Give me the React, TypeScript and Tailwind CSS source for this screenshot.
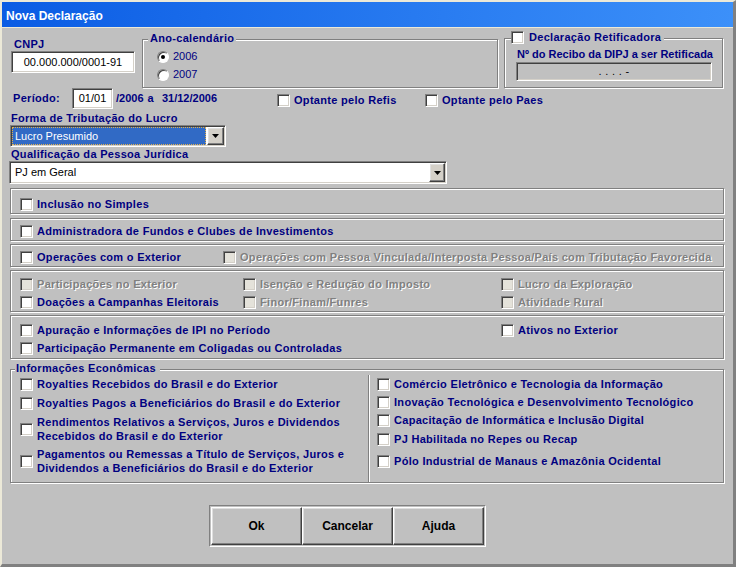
import React from "react";

// classic win32 3d edges
const sunken =
  "border border-t-[#808080] border-l-[#808080] border-r-white border-b-white shadow-[inset_1px_1px_0_#404040,inset_-1px_-1px_0_#d4d0c8]";
const raised =
  "border border-t-white border-l-white border-r-[#404040] border-b-[#404040] shadow-[inset_-1px_-1px_0_#808080,inset_1px_1px_0_#dfdfdf]";
const etched = "border border-[#808080] shadow-[inset_1px_1px_0_#fff,1px_1px_0_#fff]";
const disabledText = "text-[#808080] [text-shadow:1px_1px_0_#fff]";

function Box({ disabled }: { disabled?: boolean }) {
  return (
    <span
      className={`block w-[13px] h-[13px] shrink-0 ${sunken} ${disabled ? "bg-[#e4e2da]" : "bg-white"}`}
    />
  );
}

type CheckProps = {
  label: React.ReactNode;
  disabled?: boolean;
  className?: string;
};

function Check({ label, disabled, className = "" }: CheckProps) {
  return (
    <div className={`flex items-center gap-[4px] ${className}`}>
      <Box disabled={disabled} />
      <span className={`leading-[14px] whitespace-nowrap ${disabled ? disabledText : "text-[#000080]"}`}>
        {label}
      </span>
    </div>
  );
}

function Radio({ label, checked }: { label: string; checked?: boolean }) {
  return (
    <div className="flex items-center gap-[4px] h-[13px]">
      <span className="flex items-center justify-center w-[12px] h-[12px] rounded-full bg-white border border-t-[#808080] border-l-[#808080] border-r-white border-b-white shadow-[inset_1px_1px_0_#404040]">
        {checked && <span className="block w-[4px] h-[4px] rounded-full bg-black" />}
      </span>
      <span className="font-normal tracking-normal">{label}</span>
    </div>
  );
}

function Arrow() {
  return (
    <svg width="7" height="4" viewBox="0 0 7 4">
      <polygon points="0,0 7,0 3.5,4" fill="#000" />
    </svg>
  );
}

export default function App() {
  return (
    <div className="w-[736px] h-[567px] flex flex-col overflow-hidden bg-[#c0c0c0] font-['Liberation_Sans',Arial,sans-serif] text-[11px] leading-[13px] font-bold tracking-[0.3px] text-[#000080] border-t-2 border-l-2 border-r-[3px] border-b-[3px] border-t-[#ece9d8] border-l-[#ece9d8] border-r-[#808080] border-b-[#808080]">
      {/* title bar */}
      <div className="h-[26px] shrink-0 flex items-center pl-[4px] pt-[3px] border-b border-[#ece9d8] bg-gradient-to-r from-[#0a5ce4] to-[#3c90f9] text-white text-[12px] tracking-normal">
        Nova Declaração
      </div>

      <div className="flex-1 pl-[8px] pr-[9px]">
        {/* CNPJ / ano / retificadora */}
        <div className="flex items-start">
          <div className="w-[126px] pt-[10px] pl-[1px]">
            <div className="pl-[3px]">CNPJ</div>
            <div className={`${sunken} w-[124px] h-[22px] bg-white flex items-center justify-center font-normal tracking-normal text-black`}>
              00.000.000/0001-91
            </div>
          </div>

          <div className={`${etched} ml-[6px] mt-[11px] w-[356px] h-[49px]`}>
            <div className="-mt-[8px] ml-[5px] w-fit px-[2px] bg-[#c0c0c0]">Ano-calendário</div>
            <div className="mt-[5px] pl-[14px] flex flex-col gap-[5px]">
              <Radio checked label="2006" />
              <Radio label="2007" />
            </div>
          </div>

          <div className={`${etched} ml-[6px] mt-[10px] w-[219px] h-[50px]`}>
            <div className="-mt-[8px] ml-[6px] w-fit pr-[3px] bg-[#c0c0c0] flex items-center gap-[5px] h-[13px]">
              <Box />
              <span>Declaração Retificadora</span>
            </div>
            <div className="mt-[4px] pl-[12px] whitespace-nowrap tracking-normal">Nº do Recibo da DIPJ a ser Retificada</div>
            <div className={`${sunken} mt-[1px] ml-[11px] w-[196px] h-[19px] flex items-center justify-center font-normal text-black`}>
              . . . . -
            </div>
          </div>
        </div>

        {/* periodo */}
        <div className="flex items-center h-[21px]">
          <div className="flex items-center w-[267px]">
            <span className="pl-[3px] w-[62px]">Período:</span>
            <div className={`${sunken} w-[41px] h-[21px] bg-white flex items-center justify-center font-normal tracking-normal text-black`}>
              01/01
            </div>
            <span className="ml-[3px] tracking-normal">/2006</span>
            <span className="ml-[4px]">a</span>
            <span className="ml-[8px] tracking-normal">31/12/2006</span>
          </div>
          <Check label="Optante pelo Refis" className="w-[148px] mt-[3px]" />
          <Check label="Optante pelo Paes" className="mt-[3px]" />
        </div>

        {/* forma de tributacao */}
        <div className="mt-[3px] pl-[1px]">Forma de Tributação do Lucro</div>
        <div className={`${sunken} w-[216px] h-[22px] bg-white p-[1px] flex`}>
          <div className="flex-1 mr-[1px] flex items-center pl-[2px] bg-[#316ac5] text-white font-normal tracking-normal border border-dotted border-[#e0b050]">
            Lucro Presumido
          </div>
          <div className={`${raised} w-[17px] bg-[#d4d0c8] flex items-center justify-center`}>
            <Arrow />
          </div>
        </div>

        <div className="mt-[1px] pl-[1px]">Qualificação da Pessoa Jurídica</div>
        <div className={`${sunken} -ml-[1px] w-[438px] h-[23px] bg-white p-[1px] flex`}>
          <div className="flex-1 flex items-center pl-[4px] font-normal tracking-normal text-black">PJ em Geral</div>
          <div className={`${raised} w-[16px] bg-[#d4d0c8] flex items-center justify-center`}>
            <Arrow />
          </div>
        </div>

        {/* panels */}
        <div className={`${etched} mt-[4px] h-[26px] pl-[9px] pt-[8px]`}>
          <Check label="Inclusão no Simples" />
        </div>
        <div className={`${etched} mt-[4px] h-[23px] pl-[9px] pt-[5px]`}>
          <Check label="Administradora de Fundos e Clubes de Investimentos" />
        </div>
        <div className={`${etched} mt-[3px] h-[23px] pl-[9px] pt-[5px] flex items-start`}>
          <Check label="Operações com o Exterior" className="w-[203px]" />
          <Check disabled label="Operações com Pessoa Vinculada/Interposta Pessoa/País com Tributação Favorecida" />
        </div>
        <div className={`${etched} mt-[3px] h-[42px] pl-[9px] pt-[6px] grid grid-cols-[223px_258px_1fr] gap-y-[4px] content-start`}>
          <Check disabled label="Participações no Exterior" />
          <Check disabled label="Isenção e Redução do Imposto" />
          <Check disabled label="Lucro da Exploração" />
          <Check label="Doações a Campanhas Eleitorais" />
          <Check disabled label="Finor/Finam/Funres" />
          <Check disabled label="Atividade Rural" />
        </div>
        <div className={`${etched} mt-[3px] h-[44px] pl-[9px] pt-[7px] grid grid-cols-[481px_1fr] gap-y-[4px] content-start`}>
          <Check label="Apuração e Informações de IPI no Período" />
          <Check label="Ativos no Exterior" />
          <Check label="Participação Permanente em Coligadas ou Controladas" />
        </div>

        {/* informacoes economicas */}
        <div className={`${etched} mt-[10px] h-[114px] flex flex-col`}>
          <div className="-mt-[8px] ml-[4px] w-fit pl-[1px] pr-[4px] bg-[#c0c0c0]">Informações Econômicas</div>
          <div className="flex flex-1">
            <div className="w-[358px] border-r border-[#808080] pl-[9px] pt-[2px] flex flex-col">
              <Check label="Royalties Recebidos do Brasil e do Exterior" />
              <Check label="Royalties Pagos a Beneficiários do Brasil e do Exterior" className="mt-[5px]" />
              <Check
                className="mt-[5px]"
                label={
                  <>
                    Rendimentos Relativos a Serviços, Juros e Dividendos
                    <br />
                    Recebidos do Brasil e do Exterior
                  </>
                }
              />
              <Check
                className="mt-[4px]"
                label={
                  <>
                    Pagamentos ou Remessas a Título de Serviços, Juros e
                    <br />
                    Dividendos a Beneficiários do Brasil e do Exterior
                  </>
                }
              />
            </div>
            <div className="flex-1 border-l border-white pl-[7px] pt-[2px] flex flex-col">
              <Check label="Comércio Eletrônico e Tecnologia da Informação" />
              <Check label="Inovação Tecnológica e Desenvolvimento Tecnológico" className="mt-[4px]" />
              <Check label="Capacitação de Informática e Inclusão Digital" className="mt-[4px]" />
              <Check label="PJ Habilitada no Repes ou Recap" className="mt-[5px]" />
              <Check label="Pólo Industrial de Manaus e Amazônia Ocidental" className="mt-[8px]" />
            </div>
          </div>
        </div>

        {/* buttons */}
        <div className="mt-[22px] ml-[199px] w-[277px] h-[42px] p-[1px] flex border border-t-[#808080] border-l-[#808080] border-r-white border-b-white">
          {["Ok", "Cancelar", "Ajuda"].map((b) => (
            <button
              key={b}
              className={`${raised} w-[91px] h-[38px] bg-[#c0c0c0] text-black text-[12px] font-bold tracking-normal flex items-center justify-center`}
            >
              {b}
            </button>
          ))}
        </div>
      </div>
    </div>
  );
}
